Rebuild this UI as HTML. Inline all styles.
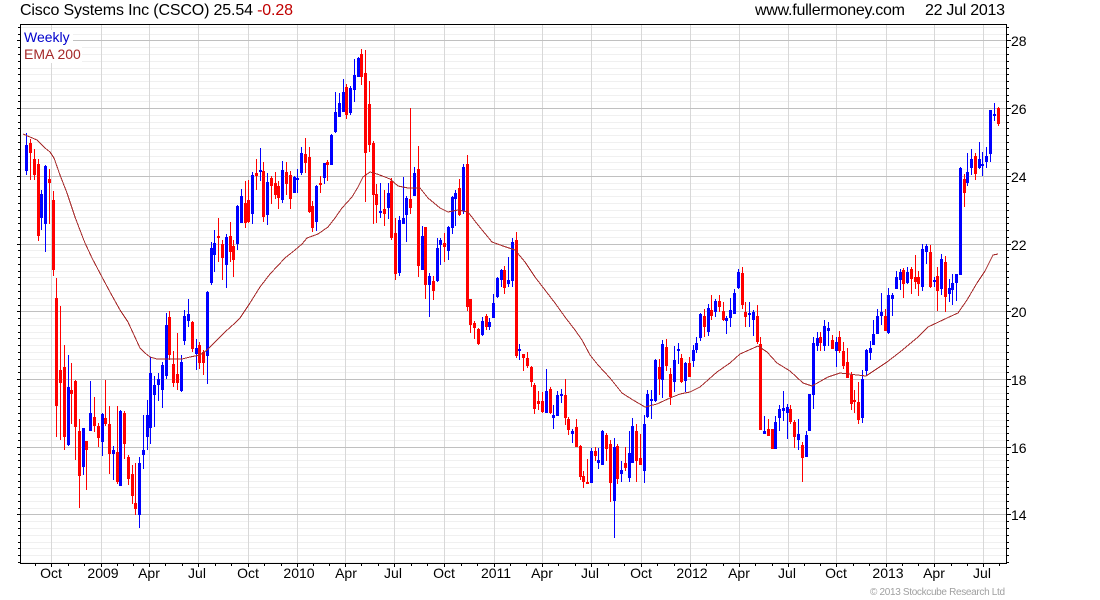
<!DOCTYPE html>
<html>
<head>
<meta charset="utf-8">
<title>Cisco Systems Inc (CSCO)</title>
<style>
html,body{margin:0;padding:0;background:#fff;width:1100px;height:600px;overflow:hidden}
svg{position:absolute;left:0;top:0;display:block}
text{font-family:"Liberation Sans",Arial,sans-serif;fill:#000}
.a{font-size:14px}
.m{text-anchor:middle}
</style>
</head>
<body>
<svg width="1100" height="600" viewBox="0 0 1100 600" xmlns="http://www.w3.org/2000/svg">
<defs>
<path id="r" d="M0 27.5H1M0 34.5H1M0 47.5H1M0 54.5H1M0 61.5H1M0 68.5H1M0 74.5H1M0 81.5H1M0 88.5H1M0 95.5H1M0 101.5H1M0 115.5H1M0 122.5H1M0 128.5H1M0 135.5H1M0 142.5H1M0 149.5H1M0 156.5H1M0 162.5H1M0 169.5H1M0 183.5H1M0 189.5H1M0 196.5H1M0 203.5H1M0 210.5H1M0 217.5H1M0 223.5H1M0 230.5H1M0 237.5H1M0 250.5H1M0 257.5H1M0 264.5H1M0 271.5H1M0 277.5H1M0 284.5H1M0 291.5H1M0 298.5H1M0 305.5H1M0 318.5H1M0 325.5H1M0 332.5H1M0 338.5H1M0 345.5H1M0 352.5H1M0 359.5H1M0 366.5H1M0 372.5H1M0 386.5H1M0 393.5H1M0 399.5H1M0 406.5H1M0 413.5H1M0 420.5H1M0 426.5H1M0 433.5H1M0 440.5H1M0 454.5H1M0 460.5H1M0 467.5H1M0 474.5H1M0 481.5H1M0 487.5H1M0 494.5H1M0 501.5H1M0 508.5H1M0 521.5H1M0 528.5H1M0 535.5H1M0 542.5H1M0 548.5H1M0 555.5H1M0 562.5H1"/>
<path id="j" d="M0 40.5H1M0 108.5H1M0 176.5H1M0 244.5H1M0 311.5H1M0 379.5H1M0 447.5H1M0 514.5H1"/>
</defs>
<g shape-rendering="crispEdges" fill="none" stroke-width="1">
<use href="#r" transform="translate(21,0) scale(985,1)" stroke="#f0f0f0"/>
<path stroke="#d8d8d8" d="M51.5 25V563M101.5 25V563M149.5 25V563M198.5 25V563M248.5 25V563M297.5 25V563M345.5 25V563M394.5 25V563M444.5 25V563M494.5 25V563M542.5 25V563M591.5 25V563M641.5 25V563M690.5 25V563M739.5 25V563M788.5 25V563M836.5 25V563M886.5 25V563M934.5 25V563M983.5 25V563"/>
<use href="#j" transform="translate(21,0) scale(985,1)" stroke="#c0c0c0"/>
</g>
<rect x="21" y="30" width="52" height="16" fill="#fff"/>
<rect x="21" y="46" width="61" height="17" fill="#fff"/>
<g shape-rendering="crispEdges" fill="none">
<path stroke="#0000ff" stroke-width="1" d="M26.5 133V175M41.5 190V230M45.5 165V252M68.5 355V446M83.5 428V475M90.5 381V431M102.5 413V456M113.5 446V480M120.5 410V486M139.5 457V528M143.5 415V469M147.5 400V450M150.5 357V444M154.5 376V427M158.5 373V401M162.5 362V408M166.5 313V379M181.5 355V392M184.5 310V345M188.5 299V327M196.5 339V370M207.5 291V384M211.5 242V285M214.5 230V272M226.5 234V288M237.5 205V250M241.5 189V223M252.5 172V224M260.5 148V181M267.5 173V225M282.5 161V203M294.5 176V193M297.5 169V193M301.5 147V175M316.5 185V231M324.5 163V184M331.5 134V165M335.5 92V133M339.5 93V117M343.5 79V112M350.5 86V115M354.5 59V102M358.5 57V77M380.5 183V218M388.5 183V219M399.5 216V276M403.5 177V224M406.5 196V242M414.5 167V196M422.5 226V270M429.5 273V317M437.5 238V282M440.5 238V265M448.5 226V260M452.5 196V234M455.5 190V226M463.5 164V214M482.5 317V336M489.5 318V330M493.5 294V318M497.5 277V298M501.5 269V287M508.5 257V287M512.5 238V287M519.5 344V360M546.5 369V413M553.5 405V429M557.5 391V416M561.5 389V403M572.5 429V443M591.5 448V483M598.5 448V469M602.5 430V465M614.5 438V538M621.5 461V482M629.5 431V482M632.5 418V463M644.5 415V483M647.5 390V418M651.5 390V419M655.5 359V402M662.5 340V398M674.5 346V392M678.5 343V364M685.5 362V392M693.5 345V367M696.5 337V353M700.5 313V341M708.5 304V336M715.5 299V317M726.5 316V334M730.5 298V327M734.5 289V314M738.5 269V289M749.5 302V327M753.5 310V336M764.5 416V434M775.5 416V449M779.5 405V431M783.5 391V421M787.5 404V439M798.5 419V450M806.5 431V457M809.5 394V431M813.5 337V409M817.5 332V351M824.5 320V351M828.5 322V346M836.5 337V367M862.5 370V423M866.5 349V376M870.5 341V360M873.5 320V345M877.5 309V334M881.5 293V325M888.5 288V334M892.5 293V316M896.5 271V289M900.5 269V290M907.5 267V284M922.5 244V291M926.5 244V264M934.5 277V287M941.5 254V295M949.5 279V302M952.5 274V305M956.5 274V301M960.5 167V275M967.5 153V186M971.5 149V175M979.5 142V169M982.5 152V176M986.5 147V168M990.5 110V162M994.5 103V121"/>
<path stroke="#ff0000" stroke-width="1" d="M30.5 139V180M34.5 149V180M38.5 159V241M49.5 169V224M53.5 191V276M56.5 278V437M60.5 306V440M64.5 345V450M71.5 363V424M75.5 380V460M79.5 419V508M86.5 441V490M94.5 397V432M98.5 423V447M105.5 380V426M109.5 406V474M117.5 406V484M124.5 411V459M128.5 455V485M132.5 465V504M135.5 463V515M169.5 311V360M173.5 351V387M177.5 333V390M192.5 321V352M199.5 342V369M203.5 350V375M218.5 218V262M222.5 240V280M230.5 222V262M233.5 240V277M245.5 181V228M248.5 180V223M256.5 159V190M263.5 162V222M271.5 176V204M275.5 172V199M278.5 181V209M286.5 162V195M290.5 171V209M305.5 138V173M309.5 147V213M312.5 201V232M320.5 176V193M327.5 160V181M346.5 84V119M361.5 49V85M365.5 50V202M369.5 81V152M373.5 141V224M376.5 184V223M384.5 190V226M391.5 178V240M395.5 218V280M410.5 108V214M418.5 146V277M425.5 227V299M433.5 276V300M444.5 233V262M459.5 179V216M467.5 155V311M470.5 299V333M474.5 321V339M478.5 328V345M486.5 314V330M504.5 266V294M516.5 232V358M523.5 354V371M527.5 352V368M531.5 366V387M534.5 383V414M538.5 391V410M542.5 392V413M550.5 387V414M565.5 379V425M568.5 417V435M576.5 419V447M580.5 445V480M583.5 471V488M587.5 459V484M595.5 447V461M606.5 433V461M610.5 440V502M617.5 444V484M625.5 447V471M636.5 424V482M640.5 434V465M659.5 359V395M666.5 339V371M670.5 368V405M681.5 354V383M689.5 357V377M704.5 309V337M711.5 295V320M719.5 295V312M723.5 302V321M742.5 267V309M745.5 302V327M757.5 305V344M760.5 337V430M768.5 419V436M772.5 429V449M790.5 405V424M794.5 420V448M802.5 442V482M820.5 332V351M832.5 335V349M839.5 331V353M843.5 342V369M847.5 348V378M851.5 372V410M854.5 390V413M858.5 382V424M885.5 309V331M903.5 268V298M911.5 267V294M915.5 255V289M918.5 271V296M930.5 245V288M937.5 267V311M945.5 256V312M964.5 174V207M975.5 153V180M998.5 107V126"/>
<path stroke="#0000ff" stroke-width="3" d="M26.5 145V171M41.5 194V218M45.5 166V224M68.5 387V445M83.5 428V467M90.5 413V431M102.5 414V442M113.5 450V454M120.5 411V486M139.5 463V515M143.5 450V455M147.5 415V437M150.5 373V428M154.5 385V395M158.5 379V385M162.5 365V390M166.5 325V376M181.5 362V391M184.5 316V341M188.5 314V321M196.5 348V354M207.5 292V356M211.5 248V283M214.5 243V255M226.5 237V265M237.5 206V244M241.5 196V223M252.5 175V214M260.5 170V172M267.5 182V215M282.5 170V200M294.5 177V193M297.5 178V180M301.5 153V173M316.5 186V222M324.5 163V178M331.5 135V165M335.5 112V132M339.5 103V117M343.5 92V112M350.5 88V113M354.5 75V90M358.5 58V77M380.5 211V213M388.5 193V208M399.5 220V273M403.5 218V224M406.5 198V215M414.5 173V196M422.5 236V270M429.5 276V285M437.5 248V281M440.5 240V245M448.5 227V251M452.5 197V228M455.5 193V199M463.5 167V211M482.5 321V335M489.5 322V327M493.5 303V318M497.5 278V297M501.5 270V280M508.5 280V284M512.5 242V281M519.5 349V351M546.5 391V413M553.5 415V418M557.5 395V416M561.5 394V396M572.5 431V434M591.5 451V483M598.5 460V463M602.5 431V465M614.5 447V501M621.5 470V474M629.5 453V478M632.5 426V463M644.5 424V471M647.5 394V417M651.5 399V401M655.5 360V401M662.5 344V380M674.5 360V382M678.5 349V351M685.5 363V381M693.5 350V361M696.5 343V350M700.5 314V338M708.5 308V332M715.5 301V312M726.5 318V321M730.5 310V318M734.5 293V314M738.5 272V288M749.5 313V315M753.5 312V320M764.5 431V434M775.5 422V449M779.5 409V418M783.5 408V411M787.5 407V413M798.5 434V440M806.5 435V457M809.5 394V431M813.5 343V395M817.5 338V346M824.5 326V346M828.5 328V331M836.5 342V351M862.5 379V418M866.5 350V371M870.5 348V353M873.5 334V345M877.5 316V334M881.5 312V316M888.5 295V333M892.5 295V299M896.5 277V289M900.5 272V280M907.5 272V283M922.5 249V287M926.5 246V252M934.5 280V282M941.5 259V289M949.5 288V294M952.5 283V290M956.5 274V283M960.5 168V275M967.5 172V183M971.5 159V168M979.5 159V168M982.5 164V166M986.5 156V162M990.5 110V154M994.5 114V116"/>
<path stroke="#ff0000" stroke-width="3" d="M30.5 143V153M34.5 159V175M38.5 164V236M49.5 179V183M53.5 200V270M56.5 298V406M60.5 370V383M64.5 367V437M71.5 390V394M75.5 381V427M79.5 431V476M86.5 441V450M94.5 417V426M98.5 426V438M105.5 418V424M109.5 424V454M117.5 452V482M124.5 413V444M128.5 457V479M132.5 474V496M135.5 503V509M169.5 317V355M173.5 364V383M177.5 374V383M192.5 322V349M199.5 345V363M203.5 352V363M218.5 236V238M222.5 244V258M230.5 236V252M233.5 246V260M245.5 203V223M248.5 200V222M256.5 173V176M263.5 171V217M271.5 178V186M275.5 183V195M278.5 186V198M286.5 172V184M290.5 175V199M305.5 154V163M309.5 157V212M312.5 206V228M320.5 183V185M327.5 162V165M346.5 87V115M361.5 54V77M365.5 73V153M369.5 104V145M373.5 143V195M376.5 194V205M384.5 209V214M391.5 181V238M395.5 233V274M410.5 199V208M418.5 169V266M425.5 227V285M433.5 281V291M444.5 243V247M459.5 188V215M467.5 164V307M470.5 299V325M474.5 323V328M478.5 329V344M486.5 316V327M504.5 270V288M516.5 240V356M523.5 354V358M527.5 358V366M531.5 367V382M534.5 385V409M538.5 401V404M542.5 401V412M550.5 389V413M565.5 395V418M568.5 419V430M576.5 427V447M580.5 446V477M583.5 476V482M587.5 482V484M595.5 451V456M606.5 435V449M610.5 444V483M617.5 446V479M625.5 463V468M636.5 431V461M640.5 458V465M659.5 367V379M666.5 347V366M670.5 374V397M681.5 358V382M689.5 363V377M704.5 316V327M711.5 310V316M719.5 301V307M723.5 311V320M742.5 273V305M745.5 312V317M757.5 316V342M760.5 344V430M768.5 429V436M772.5 429V449M790.5 409V422M794.5 422V437M802.5 445V458M820.5 337V343M832.5 340V349M839.5 337V351M843.5 351V366M847.5 362V378M851.5 375V404M854.5 400V402M858.5 402V420M885.5 316V331M903.5 270V284M911.5 269V279M915.5 277V282M918.5 277V284M930.5 252V287M937.5 276V291M945.5 262V297M964.5 179V193M975.5 156V174M998.5 108V124"/>
<polyline stroke="#a52a2a" stroke-width="1" points="23,134 30,137 37,140 40,143 45,148 50,152 54,158 60,175 67,193 75,217 83,238 85,243 92,258 102,277 110,292 120,310 128,322 134,335 140,348 145,353 150,357 157,359 182,359 190,357 200,355 207,350 215,342 225,332 235,323 240,318 250,303 260,287 270,274 285,258 295,250 302,244 307,238 318,234 328,227 335,218 342,208 352,197 358,187 363,177 370,172 377,174 385,177 390,179 398,186 408,188 420,188 428,198 440,208 448,212 458,210 468,212 478,225 492,242 503,246 515,250 525,262 535,277 545,290 555,303 565,317 575,330 582,340 590,355 598,365 610,378 622,393 633,400 645,407 657,404 670,398 680,394 690,392 700,387 717,372 730,363 740,354 758,346 767,352 777,363 790,371 803,383 812,386 828,377 840,373 857,375 866,376 887,362 900,352 918,337 928,327 947,318 958,313 967,300 977,283 985,271 993,255 998,254"/>
<path stroke="#000" stroke-width="1" d="M20 24.5H1007M20.5 24V564M1006.5 24V564M20 563.5H1007"/>
<use href="#r" transform="translate(18,0) scale(2,1)" stroke="#000"/>
<use href="#j" transform="translate(17,0) scale(3,1)" stroke="#000"/>
<use href="#r" transform="translate(1007,0) scale(2,1)" stroke="#000"/>
<use href="#j" transform="translate(1007,0) scale(4,1)" stroke="#000"/>
<path stroke="#000" stroke-width="1" d="M35.5 564v2M68.5 564v2M84.5 564v2M117.5 564v2M133.5 564v2M165.5 564v2M182.5 564v2M215.5 564v2M231.5 564v2M264.5 564v2M281.5 564v2M313.5 564v2M329.5 564v2M361.5 564v2M378.5 564v2M411.5 564v2M427.5 564v2M461.5 564v2M477.5 564v2M510.5 564v2M526.5 564v2M558.5 564v2M575.5 564v2M608.5 564v2M624.5 564v2M657.5 564v2M674.5 564v2M706.5 564v2M723.5 564v2M755.5 564v2M772.5 564v2M804.5 564v2M820.5 564v2M853.5 564v2M869.5 564v2M902.5 564v2M918.5 564v2M951.5 564v2M967.5 564v2M999.5 564v2M51.5 564v3M101.5 564v3M149.5 564v3M198.5 564v3M248.5 564v3M297.5 564v3M345.5 564v3M394.5 564v3M444.5 564v3M494.5 564v3M542.5 564v3M591.5 564v3M641.5 564v3M690.5 564v3M739.5 564v3M788.5 564v3M836.5 564v3M886.5 564v3M934.5 564v3M983.5 564v3"/>
</g>
<text x="20" y="15" font-size="16" textLength="273" lengthAdjust="spacing">Cisco Systems Inc (CSCO) 25.54 <tspan style="fill:#c00000">-0.28</tspan></text>
<text x="755" y="15" font-size="16" textLength="150" lengthAdjust="spacing">www.fullermoney.com</text>
<text x="925" y="15" font-size="16" textLength="80" lengthAdjust="spacing">22 Jul 2013</text>
<text x="24" y="42" class="a" style="fill:#0000cc">Weekly</text>
<text x="24" y="59" class="a" style="fill:#a52a2a">EMA 200</text>
<g class="a">
<text x="1011" y="46">28</text>
<text x="1011" y="114">26</text>
<text x="1011" y="182">24</text>
<text x="1011" y="250">22</text>
<text x="1011" y="317">20</text>
<text x="1011" y="385">18</text>
<text x="1011" y="453">16</text>
<text x="1011" y="520">14</text>
</g>
<g class="a m">
<text x="51" y="578">Oct</text>
<text x="103" y="578">2009</text>
<text x="149" y="578">Apr</text>
<text x="197" y="578">Jul</text>
<text x="248" y="578">Oct</text>
<text x="299" y="578">2010</text>
<text x="346" y="578">Apr</text>
<text x="393" y="578">Jul</text>
<text x="444" y="578">Oct</text>
<text x="496" y="578">2011</text>
<text x="542" y="578">Apr</text>
<text x="590" y="578">Jul</text>
<text x="641" y="578">Oct</text>
<text x="692" y="578">2012</text>
<text x="739" y="578">Apr</text>
<text x="787" y="578">Jul</text>
<text x="836" y="578">Oct</text>
<text x="888" y="578">2013</text>
<text x="934" y="578">Apr</text>
<text x="982" y="578">Jul</text>
</g>
<text x="870" y="595" font-size="10" textLength="135" lengthAdjust="spacing" style="fill:#a0a0a0">© 2013 Stockcube Research Ltd</text>
</svg>
</body>
</html>
